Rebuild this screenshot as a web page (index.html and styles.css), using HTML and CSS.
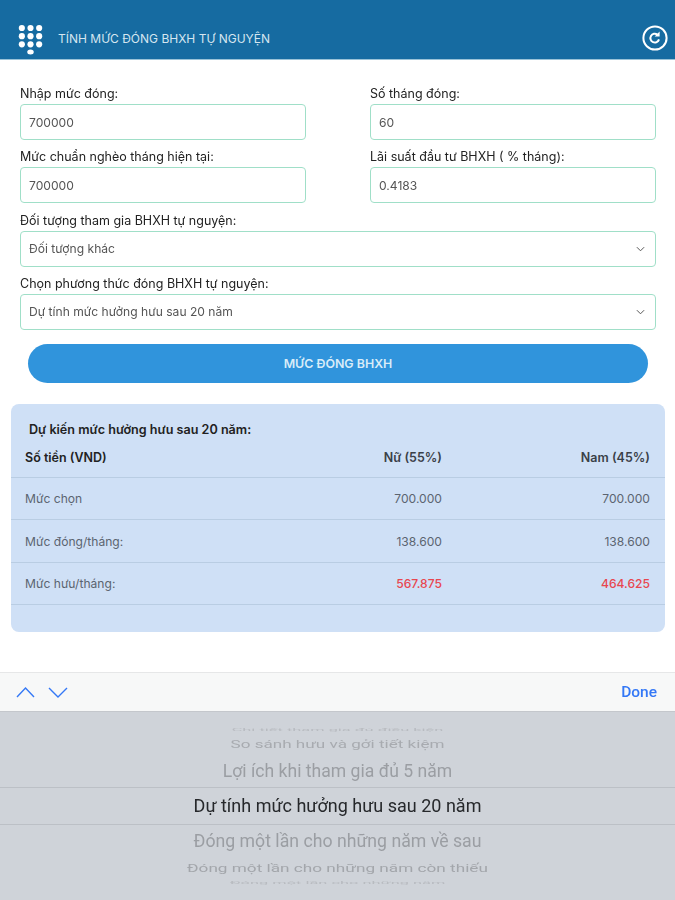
FILE: index.html
```html
<!DOCTYPE html>
<html lang="vi">
<head>
  <meta charset="UTF-8" />
  <title>Tính mức đóng BHXH tự nguyện</title>
  <link rel="stylesheet" href="styles.css">
</head>
<body>
  <div class="app">

    <!-- Thanh tiêu đề -->
    <header class="topbar">
      <svg class="menu-icon" viewBox="0 0 26 32" aria-hidden="true">
        <g fill="#fff">
          <circle cx="4" cy="4" r="3.2"/><circle cx="13" cy="4" r="3.2"/><circle cx="22" cy="4" r="3.2"/>
          <circle cx="4" cy="12.5" r="3.2"/><circle cx="13" cy="12.5" r="3.2"/><circle cx="22" cy="12.5" r="3.2"/>
          <circle cx="4" cy="21" r="3.2"/><circle cx="13" cy="21" r="3.2"/><circle cx="22" cy="21" r="3.2"/>
          <ellipse cx="13" cy="29" rx="3.4" ry="2.6"/>
        </g>
      </svg>
      <div class="topbar-title">TÍNH MỨC ĐÓNG BHXH TỰ NGUYỆN</div>
      <svg class="reload-icon" viewBox="0 0 26 26" aria-hidden="true">
        <circle cx="13" cy="13" r="11.6" fill="none" stroke="#fff" stroke-width="2"/>
        <path d="M17 14.4a4.4 4.4 0 1 1-1.6-4.8" fill="none" stroke="#fff" stroke-width="2"/>
        <path d="M17.6 6.4v5h-5z" fill="#fff"/>
      </svg>
    </header>

    <!-- Form -->
    <form class="form">
      <div class="form-row">
        <div class="field">
          <label>Nhập mức đóng:</label>
          <div class="box">700000</div>
        </div>
        <div class="field">
          <label>Số tháng đóng:</label>
          <div class="box">60</div>
        </div>
      </div>
      <div class="form-row">
        <div class="field">
          <label>Mức chuẩn nghèo tháng hiện tại:</label>
          <div class="box">700000</div>
        </div>
        <div class="field">
          <label>Lãi suất đầu tư BHXH ( % tháng):</label>
          <div class="box">0.4183</div>
        </div>
      </div>
      <div class="field">
        <label>Đối tượng tham gia BHXH tự nguyện:</label>
        <div class="box box-select">
          Đối tượng khác
          <svg class="chevron" viewBox="0 0 10 6" aria-hidden="true"><path d="M1 1l4 4 4-4" fill="none" stroke="#555" stroke-width="1.1"/></svg>
        </div>
      </div>
      <div class="field">
        <label>Chọn phương thức đóng BHXH tự nguyện:</label>
        <div class="box box-select">
          Dự tính mức hưởng hưu sau 20 năm
          <svg class="chevron" viewBox="0 0 10 6" aria-hidden="true"><path d="M1 1l4 4 4-4" fill="none" stroke="#555" stroke-width="1.1"/></svg>
        </div>
      </div>
      <button type="button" class="btn-calc">MỨC ĐÓNG BHXH</button>
    </form>

    <!-- Bảng kết quả -->
    <section class="result">
      <h2 class="result-title">Dự kiến mức hưởng hưu sau 20 năm:</h2>
      <div class="result-row result-head">
        <span>Số tiền (VND)</span><span>Nữ (55%)</span><span>Nam (45%)</span>
      </div>
      <div class="result-row">
        <span>Mức chọn</span><span>700.000</span><span>700.000</span>
      </div>
      <div class="result-row">
        <span>Mức đóng/tháng:</span><span>138.600</span><span>138.600</span>
      </div>
      <div class="result-row result-pension">
        <span>Mức hưu/tháng:</span><span>567.875</span><span>464.625</span>
      </div>
    </section>

    <!-- Bàn phím chọn của iOS -->
    <div class="keyboard">
      <div class="toolbar">
        <svg class="nav-arrows" viewBox="0 0 54 12" aria-hidden="true">
          <path d="M1 11L9.5 2l8.500 9M33 2l9 9 9-9" fill="none" stroke="#3478f6" stroke-width="1.4"/>
        </svg>
        <span class="done">Done</span>
      </div>
      <div class="picker">
        <div class="wheel wheel-5">Chi tiết tham gia đủ điều kiện</div>
        <div class="wheel wheel-4">So sánh hưu và gởi tiết kiệm</div>
        <div class="wheel wheel-2">Lợi ích khi tham gia đủ 5 năm</div>
        <div class="wheel wheel-selected">Dự tính mức hưởng hưu sau 20 năm</div>
        <div class="wheel wheel-2 wheel-below">Đóng một lần cho những năm về sau</div>
        <div class="wheel wheel-3">Đóng một lần cho những năm còn thiếu</div>
        <div class="wheel wheel-5">Đóng một lần cho những năm</div>
      </div>
    </div>

  </div>
</body>
</html>
```

FILE: styles.css
```css
/* Base */
html, body {
  margin: 0;
  padding: 0;
  background: #fff;
}

.app {
  width: 675px;
  height: 900px;
  overflow: hidden;
  display: flex;
  flex-direction: column;
  font-family: 'Inter', 'Liberation Sans', sans-serif;
  color: #333;
  filter: blur(0.5px);
}

/* Topbar */
.topbar {
  height: 60px;
  flex: none;
  box-sizing: border-box;
  padding: 24px 7px 0 18px;
  display: flex;
  align-items: flex-start;
  background: #166ba1;
  border-bottom: 1px solid #9ac3d8;
}
.menu-icon {
  width: 25px;
  height: 31px;
  flex: none;
}
.topbar-title {
  margin: 7px 0 0 15px;
  font-size: 12px;
  line-height: 15px;
  color: #d5e6f0;
  flex: 1;
}
.reload-icon {
  width: 26px;
  height: 26px;
  flex: none;
  margin-top: 1px;
}

/* Form */
.form {
  display: flex;
  flex-direction: column;
  padding: 25px 19px 0 20px;
}
.form-row {
  display: grid;
  grid-template-columns: 286px 286px;
  column-gap: 64px;
}
.field {
  display: flex;
  flex-direction: column;
  height: 63.3px;
}
.field label {
  font-size: 12.5px;
  line-height: 17px;
  height: 19px;
  color: #222;
}
.box {
  box-sizing: border-box;
  height: 36px;
  border: 1.5px solid #a0dfc8;
  border-radius: 4px;
  padding: 0 8px;
  display: flex;
  align-items: center;
  justify-content: space-between;
  font-size: 12.1px;
  color: #555;
  background: #fff;
}
.box-select {
  padding-right: 10px;
}
.chevron {
  width: 9px;
  height: 6px;
}

.btn-calc {
  display: block;
  height: 39px;
  margin: 6px 8px 0 8px;
  border: none;
  border-radius: 20px;
  background: #3094dc;
  color: #d8ecf8;
  font-family: inherit;
  font-size: 12.4px;
  font-weight: 600;
}

/* Result card */
.result {
  margin: 21px 10px 0 11px;
  height: 228px;
  box-sizing: border-box;
  background: #cfe0f6;
  border-radius: 8px;
  padding-top: 19px;
}
.result-title {
  margin: 0 0 0 18px;
  font-size: 12.6px;
  line-height: 14px;
  font-weight: 600;
  color: #222;
}
.result-row {
  display: grid;
  grid-template-columns: 1fr 216px 208px;
  align-items: center;
  height: 42.3px;
  box-sizing: border-box;
  padding: 0 15px 0 14px;
  border-bottom: 1px solid #b9cde3;
  font-size: 12.1px;
  color: #5b6470;
}
.result-row span:nth-child(n+2) {
  text-align: right;
}
.result-head {
  height: 41px;
  font-size: 12.5px;
  font-weight: 600;
  color: #3a4048;
}
.result-head span:first-child {
  color: #222;
}
.result-pension span:nth-child(n+2) {
  color: #e8464f;
  font-weight: 500;
}

/* iOS keyboard */
.keyboard {
  margin-top: auto;
  height: 228px;
  flex: none;
}
.toolbar {
  height: 40px;
  box-sizing: border-box;
  padding: 0 18px 0 16px;
  display: flex;
  align-items: center;
  justify-content: space-between;
  background: #f7f8f8;
  border-top: 1px solid #e6e7e8;
  border-bottom: 1px solid #c4c7cc;
}
.nav-arrows {
  width: 54px;
  height: 12px;
}
.done {
  font-family: 'Roboto', sans-serif;
  font-size: 15.5px;
  font-weight: 500;
  color: #3478f6;
}
.picker {
  height: 188px;
  overflow: hidden;
  background: #cfd3d9;
  display: flex;
  flex-direction: column;
  align-items: center;
  padding-top: 15px;
  box-sizing: border-box;
}
.wheel {
  align-self: stretch;
  text-align: center;
  font-family: 'Roboto', sans-serif;
  white-space: nowrap;
  flex: none;
}
.wheel-selected {
  box-sizing: border-box;
  height: 38px;
  line-height: 36px;
  font-size: 18px;
  color: #26282b;
  border-top: 1px solid #bcc0c6;
  border-bottom: 1px solid #bcc0c6;
}
.wheel-2 {
  height: 33px;
  line-height: 34px;
  font-size: 17.6px;
  color: #9b9ea3;
}
.wheel-below {
  line-height: 32px;
  font-size: 17.7px;
}
.wheel-3 {
  height: 22px;
  line-height: 20px;
  font-size: 17.2px;
  color: #a3a6ab;
  transform: scaleY(0.68);
}
.wheel-4 {
  height: 21px;
  line-height: 22px;
  font-size: 17.1px;
  color: #a8abb0;
  transform: scaleY(0.68);
}
.wheel-5 {
  height: 6px;
  line-height: 6px;
  font-size: 16.4px;
  color: #b8bbc0;
  transform: scaleY(0.25);
}
```
